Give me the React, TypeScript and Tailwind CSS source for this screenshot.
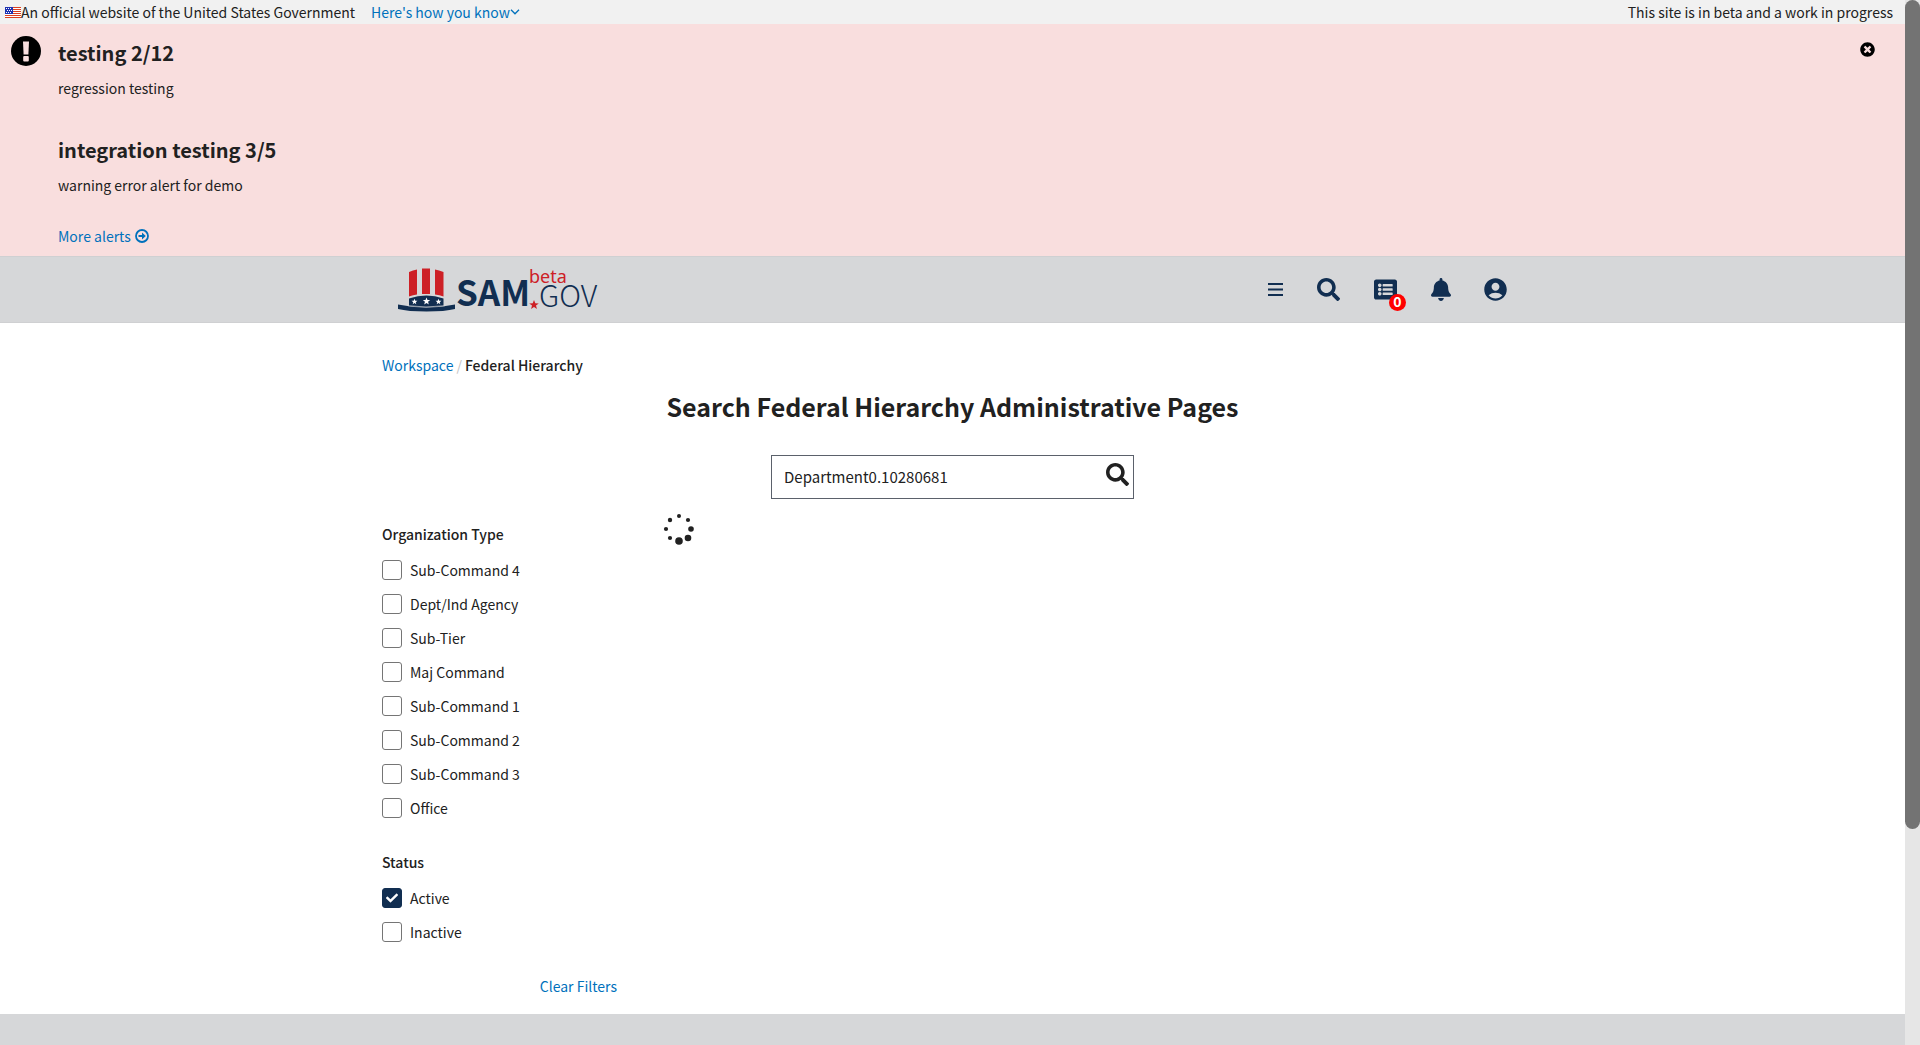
import { FaBell, FaCheck, FaListAlt, FaSearch, FaTimesCircle } from "react-icons/fa";
import { MdAccountCircle } from "react-icons/md";

const organizationTypes = [
  "Sub-Command 4",
  "Dept/Ind Agency",
  "Sub-Tier",
  "Maj Command",
  "Sub-Command 1",
  "Sub-Command 2",
  "Sub-Command 3",
  "Office",
];

const spinnerDots = [
  { x: 16, y: 3, r: 2 },
  { x: 25, y: 7, r: 2.1 },
  { x: 28, y: 16, r: 2.8 },
  { x: 25, y: 25, r: 3.3 },
  { x: 16, y: 28, r: 3.8 },
  { x: 7, y: 25, r: 2.1 },
  { x: 3, y: 16, r: 2.1 },
  { x: 7, y: 7, r: 2.2 },
];

const starPoints = "0,-1 0.26,-0.33 0.95,-0.31 0.4,0.12 0.59,0.81 0,0.42 -0.59,0.81 -0.4,0.12 -0.95,-0.31 -0.26,-0.33";

function Flag() {
  return (
    <svg viewBox="0 0 16 11" className="h-[11px] w-4 shrink-0" aria-hidden="true">
      <rect width="16" height="11" fill="#fff" />
      {[0, 2, 4, 6, 8, 10].map((y) => (
        <rect key={y} y={y} width="16" height="1" fill="#db3e1f" />
      ))}
      <rect width="8" height="7" fill="#1e33b1" />
      {[1, 3, 5].map((y) =>
        [1, 3, 5].map((x) => <rect key={`${x}-${y}`} x={y === 3 ? x + 1 : x} y={y} width="1" height="1" fill="#fff" />),
      )}
    </svg>
  );
}

function SamLogo() {
  return (
    <svg viewBox="0 0 200 44" className="h-11 w-[200px] overflow-visible" role="img" aria-label="beta SAM.GOV">
      <g fill="#cd2026">
        <path d="M11 4q4-1.700 8-2.500v25q-4 .7-8 2z" />
        <path d="M24 .5h8V26h-8z" />
        <path d="M37 1.500q4 .8 8.500 2.500v24.500q-4-1.300-8.500-2z" />
      </g>
      <g fill="#112e51">
        <path d="M11 30.500q17.500-6 34.500 0V38q-17 2.500-34.500 0z" />
        <path d="M0 36.500q28.500 6 57 0V41q-10 2.500-28.500 2.500T0 41z" />
      </g>
      <path d="M10 37.700q17.500 2.600 37 0" stroke="#d6d7d9" strokeWidth=".7" fill="none" />
      <g fill="#fff">
        <polygon points={starPoints} transform="translate(16.500 33.800) scale(3.100)" />
        <polygon points={starPoints} transform="translate(28.500 33.300) scale(3.900)" />
        <polygon points={starPoints} transform="translate(40.500 33.800) scale(3.100)" />
      </g>
      <text x="58" y="38" fontSize="35" fontWeight="700" fill="#112e51" fontFamily="'Noto Sans CJK SC', sans-serif">SAM</text>
      <text x="131" y="15" fontSize="18" fill="#cd2026" fontFamily="'Noto Sans', sans-serif">beta</text>
      <polygon points={starPoints} transform="translate(136 37) scale(5)" fill="#cd2026" />
      <text x="141" y="39" fontSize="30" fontWeight="300" fill="#112e51" fontFamily="'Noto Sans CJK SC', sans-serif">GOV</text>
    </svg>
  );
}

function CheckRow({ label, checked = false }: { label: string; checked?: boolean }) {
  return (
    <li className="h-[34px]">
      <label className="flex h-5 items-center gap-2">
        <span className="grid size-5 shrink-0">
          <input
            type="checkbox"
            defaultChecked={checked}
            className="peer col-start-1 row-start-1 size-5 appearance-none rounded-[3px] border border-[#757575] bg-white checked:border-[#112e51] checked:bg-[#112e51]"
          />
          <FaCheck className="pointer-events-none invisible col-start-1 row-start-1 size-3 place-self-center text-white peer-checked:visible" />
        </span>
        {label}
      </label>
    </li>
  );
}

function Alert({ title, text }: { title: string; text: string }) {
  return (
    <article className="pb-9">
      <h2 className="text-[20px] leading-7 font-bold">{title}</h2>
      <p className="mt-[9px] leading-6">{text}</p>
    </article>
  );
}

export default function App() {
  return (
    <div className="flex h-screen overflow-hidden bg-white font-['Noto_Sans_CJK_SC','Noto_Sans',sans-serif] text-[14px] leading-6 text-[#212121]">
      <div className="flex min-w-0 flex-1 flex-col">
        <div className="flex h-6 shrink-0 items-center bg-[#f1f1f1] pr-3 pl-[5px]">
          <Flag />
          <span>An official website of the United States Government</span>
          <button className="ml-4 flex items-center text-[#0071bc]">
            Here's how you know
            <svg viewBox="0 0 10 6" className="h-[6px] w-[10px]" fill="none" stroke="currentColor" aria-hidden="true">
              <path d="M1 .8 5 4.800 9 .8" strokeWidth="1.300" />
            </svg>
          </button>
          <span className="ml-auto">This site is in beta and a work in progress</span>
        </div>

        <section aria-label="Site alerts" className="flex shrink-0 bg-[#f9dede] pt-3 pr-[30px] pb-2 pl-[11px]">
          <svg viewBox="0 0 30 30" className="mr-[17px] size-[30px] shrink-0" aria-hidden="true">
            <circle cx="15" cy="15" r="15" />
            <path d="M12 5.500h6l-.6 13h-4.800z" fill="#f9dede" />
            <rect x="12.200" y="20" width="5.600" height="5.500" rx="1" fill="#f9dede" />
          </svg>
          <div className="flex-1 pt-[3px]">
            <Alert title="testing 2/12" text="regression testing" />
            <Alert title="integration testing 3/5" text="warning error alert for demo" />
            <div className="-mt-[9px]">
              <a href="#alerts" className="flex w-fit items-center gap-1 text-[#0071bc]">
                More alerts
                <svg viewBox="0 0 14 14" className="size-[14px]" aria-hidden="true">
                  <circle cx="7" cy="7" r="6" fill="none" stroke="currentColor" strokeWidth="1.800" />
                  <path d="M3.500 6H7V3.500L10.800 7 7 10.500V8H3.500z" fill="currentColor" />
                </svg>
              </a>
            </div>
          </div>
          <button aria-label="Close alerts" className="mt-[6px] h-[15px] text-black">
            <FaTimesCircle className="size-[15px]" />
          </button>
        </section>

        <header className="h-[67px] shrink-0 border-y border-[#cfd0d2] bg-[#d6d7d9]">
          <div className="mx-auto flex h-full max-w-[1141px] items-center justify-between px-4">
            <a href="#home"><SamLogo /></a>
            <nav aria-label="Main" className="flex items-center text-[#112e51]">
              <button aria-label="Menu" className="mr-[34px]">
                <svg viewBox="0 0 15 13" className="h-[13px] w-[15px]" fill="currentColor">
                  <path d="M0 0h15v2H0zM0 5.500h15v2H0zM0 11h15v2H0z" />
                </svg>
              </button>
              <button aria-label="Search" className="mr-[34px]"><FaSearch className="size-[23px]" /></button>
              <button aria-label="Requests" className="relative mr-[34px]">
                <FaListAlt className="size-[23px]" />
                <span className="absolute top-4 left-[15px] size-[17px] rounded-full bg-[#f00] text-center text-[14px] leading-[14px] font-bold text-white">0</span>
              </button>
              <button aria-label="Notifications" className="mr-[33px]"><FaBell className="h-[23px] w-5" /></button>
              <button aria-label="Account"><MdAccountCircle className="-m-[2px] size-[27px]" /></button>
            </nav>
          </div>
        </header>

        <main className="mx-auto w-full max-w-[1141px] shrink-0 pt-[30px] pb-4">
          <nav aria-label="Breadcrumb" className="flex gap-[3px]">
            <a href="#workspace" className="text-[#0071bc]">Workspace</a>
            <span className="text-[#c4c4c4]">/</span>
            <span className="font-medium">Federal Hierarchy</span>
          </nav>
          <h1 className="mt-[11px] text-center text-[25px] leading-9 font-bold">Search Federal Hierarchy Administrative Pages</h1>
          <form className="mx-auto mt-[31px] flex h-11 w-[363px] border border-[#5b616b]">
            <input aria-label="Search" defaultValue="Department0.10280681" className="min-w-0 flex-1 pl-3 text-[15px] outline-none" />
            <button type="button" aria-label="Submit search" className="mr-1 flex pt-[7px]">
              <FaSearch className="size-[23px]" />
            </button>
          </form>
          <div className="flex">
            <aside className="w-[281px] pt-[23px]">
              <fieldset>
                <legend className="mb-[14px] font-medium">Organization Type</legend>
                <ul>{organizationTypes.map((label) => <CheckRow key={label} label={label} />)}</ul>
              </fieldset>
              <fieldset className="mt-[18px]">
                <legend className="mb-[14px] font-medium">Status</legend>
                <ul>
                  <CheckRow label="Active" checked />
                  <CheckRow label="Inactive" />
                </ul>
              </fieldset>
              <div className="mt-[18px] flex justify-end pr-[46px]">
                <button className="text-[#0071bc]">Clear Filters</button>
              </div>
            </aside>
            <div role="status" aria-label="Loading" className="pt-[14px]">
              <svg viewBox="0 0 32 32" className="size-8" fill="#212121">
                {spinnerDots.map((dot) => <circle key={`${dot.x}-${dot.y}`} cx={dot.x} cy={dot.y} r={dot.r} />)}
              </svg>
            </div>
          </div>
        </main>

        <footer className="flex-1 bg-[#d6d7d9]" />
      </div>
      <div className="w-[15px] shrink-0 bg-[#e6e6e6]" aria-hidden="true">
        <div className="h-[79.3%] rounded-full bg-[#737373]" />
      </div>
    </div>
  );
}
